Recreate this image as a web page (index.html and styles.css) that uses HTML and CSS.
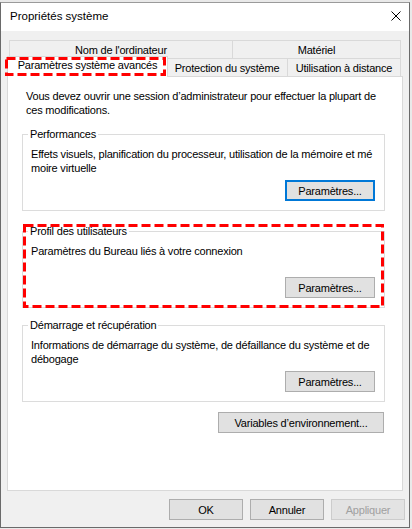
FILE: index.html
```html
<!DOCTYPE html>
<html lang="fr">
<head>
<meta charset="utf-8">
<title>Propriétés système</title>
<link rel="stylesheet" href="styles.css">
</head>
<body>
<div class="window">
  <div class="titlebar">
    <span class="title">Propriétés système</span>
    <svg class="close" width="10" height="10" viewBox="0 0 10 10"><path d="M0.5 0.5 L9.5 9.5 M9.5 0.5 L0.5 9.5" stroke="#000" stroke-width="1" fill="none"/></svg>
  </div>
  <div class="client">
    <div class="tabs">
      <div class="tabrow back">
        <div class="tab t-nom">Nom de l'ordinateur</div>
        <div class="tab t-mat">Matériel</div>
      </div>
      <div class="tabrow front">
        <div class="tab selected">Paramètres système avancés
          <svg class="mark mark-tab" width="161" height="19" viewBox="0 0 161 19"><rect x="1.5" y="1.5" width="158" height="16" fill="none" stroke="#f00" stroke-width="3" stroke-dasharray="9 4"/></svg>
        </div>
        <div class="tab t-prot">Protection du système</div>
        <div class="tab t-util">Utilisation à distance</div>
      </div>
    </div>
    <div class="panel">
      <p class="intro">Vous devez ouvrir une session d’administrateur pour effectuer la plupart de<br>ces modifications.</p>

      <div class="group-wrap g1">
        <fieldset class="group">
          <legend>Performances</legend>
          <p class="desc">Effets visuels, planification du processeur, utilisation de la mémoire et mé<br>moire virtuelle</p>
          <button class="btn btn-set focused">Paramètres...</button>
        </fieldset>
      </div>

      <div class="group-wrap g2">
        <fieldset class="group">
          <legend>Profil des utilisateurs</legend>
          <p class="desc">Paramètres du Bureau liés à votre connexion</p>
          <button class="btn btn-set">Paramètres...</button>
        </fieldset>
        <svg class="mark mark-group" width="361" height="84" viewBox="0 0 361 84"><rect x="1.5" y="1.5" width="358" height="81" fill="none" stroke="#f00" stroke-width="3" stroke-dasharray="9 4"/></svg>
      </div>

      <div class="group-wrap g3">
        <fieldset class="group">
          <legend>Démarrage et récupération</legend>
          <p class="desc">Informations de démarrage du système, de défaillance du système et de<br>débogage</p>
          <button class="btn btn-set">Paramètres...</button>
        </fieldset>
      </div>

      <button class="btn btn-env">Variables d’environnement...</button>
    </div>
    <div class="footer">
      <button class="btn btn-foot">OK</button>
      <button class="btn btn-foot">Annuler</button>
      <button class="btn btn-foot disabled">Appliquer</button>
    </div>
  </div>
</div>
</body>
</html>
```
FILE: styles.css
```css
* { box-sizing: border-box; }

html, body {
  margin: 0;
  padding: 0;
}

body {
  background: #e9e9e9;
  font-family: "Liberation Sans", Arial, sans-serif;
  font-size: 11px;
  letter-spacing: -0.2px;
  line-height: 14px;
  color: #000;
}

.window {
  width: 410px;
  height: 526px;
  margin-top: 2px;
  border: 1px solid #6a6a6a;
  border-top-color: #9a9a9a;
  background: #f0f0f0;
  display: flex;
  flex-direction: column;
}

.titlebar {
  height: 28px;
  background: #fff;
  display: flex;
  align-items: center;
  justify-content: space-between;
  padding: 0 8px 2px 9px;
}

.title {
  font-size: 11.5px;
  letter-spacing: 0;
}

.close { display: block; }

.client {
  flex: 1;
  display: flex;
  flex-direction: column;
  padding-top: 9px;
}

.tabs {
  margin: 0 6px;
}

.tabrow {
  display: flex;
  align-items: flex-start;
  height: 18px;
  margin: 0 2px;
}

.tab {
  height: 18px;
  border: 1px solid #d9d9d9;
  border-bottom: none;
  background: #f0f0f0;
  text-align: center;
  white-space: nowrap;
  padding-top: 2px;
}

.t-nom { width: 224px; }
.t-mat { flex: 1; margin-left: -1px; }

.selected {
  position: relative;
  z-index: 1;
  width: 161px;
  height: 21px;
  margin: -2px -2px 0 -2px;
  background: #fff;
  padding-top: 1px;
}

.t-prot { width: 122px; }
.t-util { flex: 1; margin-left: -1px; }

.mark {
  position: absolute;
  display: block;
  pointer-events: none;
}

.mark-tab {
  left: -3px;
  top: 0;
}

.panel {
  flex: 1;
  margin: 0 6px;
  background: #fff;
  border: 1px solid #d9d9d9;
  padding: 12px 17px 0 14px;
  display: flex;
  flex-direction: column;
}

.intro {
  margin: 0;
  padding-left: 4px;
  white-space: nowrap;
}

.group-wrap {
  position: relative;
}

.g1 { margin-top: 10px; }
.g2 { margin-top: 13px; }
.g3 { margin-top: 10px; }

.mark-group {
  left: 1px;
  top: 0;
}

.group {
  margin: 0;
  border: 1px solid #dcdcdc;
  padding: 0 9px 9px 8px;
  display: flex;
  flex-direction: column;
  min-width: 0;
}

.group legend {
  padding: 0 2px;
  margin-left: -3px;
  line-height: 14px;
}

.desc {
  margin: 6px 0 0 0;
  min-height: 28px;
  white-space: nowrap;
}

.btn {
  font-family: inherit;
  font-size: 11px;
  letter-spacing: -0.2px;
  line-height: 14px;
  color: #000;
  background: #e1e1e1;
  border: 1px solid #adadad;
  border-radius: 0;
  padding: 0;
  height: 21px;
  margin: 0;
}

.btn-set {
  align-self: flex-end;
  width: 90px;
  margin-top: 5px;
}

.focused {
  border: 2px solid #0078d7;
}

.btn-env {
  align-self: flex-end;
  width: 166px;
  margin: 10px 1px 0 0;
}

.footer {
  display: flex;
  justify-content: flex-end;
  gap: 7px;
  padding: 8px 4px 7px 0;
}

.btn-foot {
  width: 74px;
}

.disabled {
  background: #e3e3e3;
  border-color: #cccccc;
  color: #a0a0a0;
}
```
